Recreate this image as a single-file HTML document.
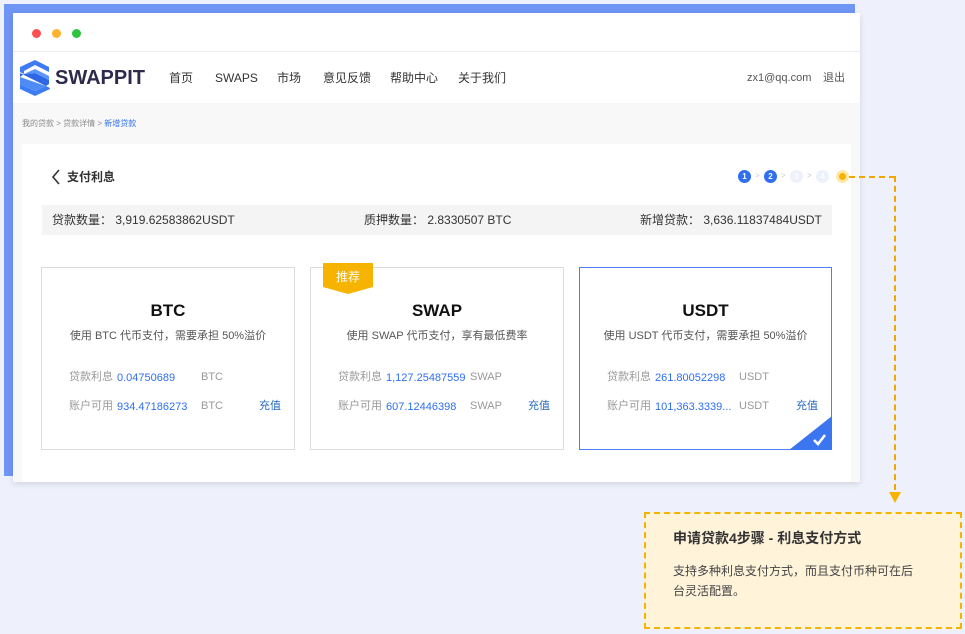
<!DOCTYPE html>
<html><head><meta charset="utf-8"><style>
*{margin:0;padding:0;box-sizing:border-box}
html,body{width:965px;height:634px;overflow:hidden}
body{background:#eef1fb;font-family:"Liberation Sans","Noto Sans CJK SC",sans-serif;position:relative;color:#333;line-height:1.2}
.a{position:absolute;white-space:nowrap}
.card{position:absolute;top:267px;width:254px;height:183px;background:#fff;border:1px solid #dcdcdc}
.card h3{position:absolute;top:33px;left:0;width:100%;text-align:center;font-size:17px;font-weight:bold;color:#111;line-height:20px}
.card .d{position:absolute;top:61px;left:0;width:100%;text-align:center;font-size:11px;color:#555;line-height:14px}
.row{position:absolute;left:27px;font-size:11px;color:#999;white-space:nowrap;line-height:14px;height:14px}
.row b{font-weight:normal;color:#2f6ff0;position:absolute;left:48px;top:1px}
.row i{font-style:normal;position:absolute;left:132px;top:0;color:#999}
.cz{position:absolute;right:13px;font-size:11px;color:#2a6cc0;line-height:14px}
.dot{position:absolute;top:170px;width:13px;height:13px;border-radius:50%;font-size:8px;color:#fff;text-align:center;line-height:13px;font-weight:bold}
.ar{position:absolute;top:171px;font-size:8px;color:#ccc;line-height:10px}
.nav{position:absolute;top:71px;font-size:12px;color:#333;line-height:15px}
</style></head><body>
<div class="a" style="left:4px;top:4px;width:851px;height:472px;background:#6f95f5"></div>
<div class="a" style="left:13px;top:13px;width:847px;height:469px;background:#fff;box-shadow:0 2px 6px rgba(0,0,0,.12)"></div>
<div class="a" style="left:13px;top:51px;width:847px;height:1px;background:#eee"></div>
<div class="a" style="left:32px;top:29px;width:9px;height:9px;border-radius:50%;background:#fb5050"></div>
<div class="a" style="left:52px;top:29px;width:9px;height:9px;border-radius:50%;background:#fdb32d"></div>
<div class="a" style="left:72px;top:29px;width:9px;height:9px;border-radius:50%;background:#2fc43f"></div>
<svg class="a" style="left:20px;top:59px" width="30" height="38" viewBox="0 0 30 38">
<polygon points="15,1 29,8 29,13 15,6 4,12 4,15 0,13 0,8" fill="#3d7cf2"/>
<polygon points="0,14 4,16 26,27 29,25 29,21 15,14 4,15 0,18" fill="#2f66e6"/>
<polygon points="4,15 15,10 29,17 29,21 15,14" fill="#5a95f7"/>
<polygon points="0,25 15,32 26,27 30,29 30,30 15,37 0,30" fill="#3d7cf2"/>
<polygon points="0,18 26,27 15,32 0,25" fill="#4f8bf5"/>
</svg>
<div class="a" style="left:55px;top:66px;font-size:20px;font-weight:bold;color:#2d2a4a;line-height:24px">SWAPPIT</div>
<div class="nav" style="left:169px">首页</div>
<div class="nav" style="left:215px">SWAPS</div>
<div class="nav" style="left:277px">市场</div>
<div class="nav" style="left:323px">意见反馈</div>
<div class="nav" style="left:390px">帮助中心</div>
<div class="nav" style="left:458px">关于我们</div>
<div class="nav" style="left:747px;font-size:11px;color:#555">zx1@qq.com</div>
<div class="nav" style="left:823px;font-size:11px;color:#555">退出</div>
<div class="a" style="left:13px;top:103px;width:847px;height:379px;background:#f8f8f8"></div>
<div class="a" style="left:22px;top:119px;font-size:8px;color:#888;line-height:10px">我的贷款 &gt; 贷款详情 &gt; <span style="color:#2f6ff0">新增贷款</span></div>
<div class="a" style="left:22px;top:144px;width:829px;height:338px;background:#fff"></div>
<svg class="a" style="left:51px;top:169px" width="10" height="16" viewBox="0 0 10 16"><path d="M8 1 L2 8 L8 15" stroke="#333" stroke-width="1.6" fill="none"/></svg>
<div class="a" style="left:67px;top:170px;font-size:12px;font-weight:bold;color:#333;line-height:15px">支付利息</div>
<div class="dot" style="left:738px;background:#2f6ff0">1</div>
<div class="ar" style="left:755px">&gt;</div>
<div class="dot" style="left:764px;background:#2f6ff0">2</div>
<div class="ar" style="left:781px">&gt;</div>
<div class="dot" style="left:790px;background:#edf1fc">3</div>
<div class="ar" style="left:807px">&gt;</div>
<div class="dot" style="left:816px;background:#edf1fc">4</div>
<div class="a" style="left:836px;top:170px;width:13px;height:13px;border-radius:50%;background:#ffe7a8"></div>
<div class="a" style="left:839px;top:173px;width:7px;height:7px;border-radius:50%;background:#f6b400"></div>
<div class="a" style="left:849px;top:176px;width:46px;border-top:2px dashed #f0a800"></div>
<div class="a" style="left:894px;top:176px;height:314px;border-left:2px dashed #f0a800"></div>
<div class="a" style="left:889px;top:492px;width:0;height:0;border-left:6px solid transparent;border-right:6px solid transparent;border-top:11px solid #f6b400"></div>
<div class="a" style="left:42px;top:205px;width:790px;height:30px;background:#f4f4f4"></div>
<div class="a" style="left:52px;top:213px;font-size:12px;color:#333;line-height:15px">贷款数量：&nbsp;3,919.62583862USDT</div>
<div class="a" style="left:364px;top:213px;font-size:12px;color:#333;line-height:15px">质押数量：&nbsp;2.8330507 BTC</div>
<div class="a" style="left:640px;top:213px;font-size:12px;color:#333;line-height:15px">新增贷款：&nbsp;3,636.11837484USDT</div>
<div class="card" style="left:41px">
<h3>BTC</h3><div class="d">使用 BTC 代币支付，需要承担 50%溢价</div>
<div class="row" style="top:102px">贷款利息<b>0.04750689</b><i>BTC</i></div>
<div class="row" style="top:131px">账户可用<b>934.47186273</b><i>BTC</i></div>
<div class="cz" style="top:131px">充值</div>
</div>
<div class="card" style="left:310px">
<h3>SWAP</h3><div class="d">使用 SWAP 代币支付，享有最低费率</div>
<div class="row" style="top:102px">贷款利息<b>1,127.25487559</b><i>SWAP</i></div>
<div class="row" style="top:131px">账户可用<b>607.12446398</b><i>SWAP</i></div>
<div class="cz" style="top:131px">充值</div>
</div>
<svg class="a" style="left:323px;top:263px" width="50" height="31" viewBox="0 0 50 31"><polygon points="0,0 50,0 50,24 25,31 0,24" fill="#f6b400"/></svg>
<div class="a" style="left:336px;top:270px;font-size:12px;color:#fff;line-height:15px">推荐</div>
<div class="card" style="left:579px;width:253px;height:183px;border:1.5px solid #4a80f5">
<h3>USDT</h3><div class="d">使用 USDT 代币支付，需要承担 50%溢价</div>
<div class="row" style="top:102px">贷款利息<b>261.80052298</b><i>USDT</i></div>
<div class="row" style="top:131px">账户可用<b>101,363.3339...</b><i>USDT</i></div>
<div class="cz" style="top:131px">充值</div>
<svg class="a" style="right:-1px;bottom:-1px" width="43" height="34" viewBox="0 0 43 34"><polygon points="43,0 43,34 0,34" fill="#3b76f0"/><path d="M25 24 L29 28 L36 19" stroke="#fff" stroke-width="2.6" fill="none"/></svg>
</div>
<div class="a" style="left:644px;top:512px;width:318px;height:117px;background:#fff3da;border:2px dashed #f6b400"></div>
<div class="a" style="left:673px;top:529px;font-size:14px;font-weight:bold;color:#333;line-height:18px">申请贷款4步骤 - 利息支付方式</div>
<div class="a" style="left:673px;top:561px;font-size:12px;line-height:20px;color:#444">支持多种利息支付方式，而且支付币种可在后<br>台灵活配置。</div>
</body></html>
